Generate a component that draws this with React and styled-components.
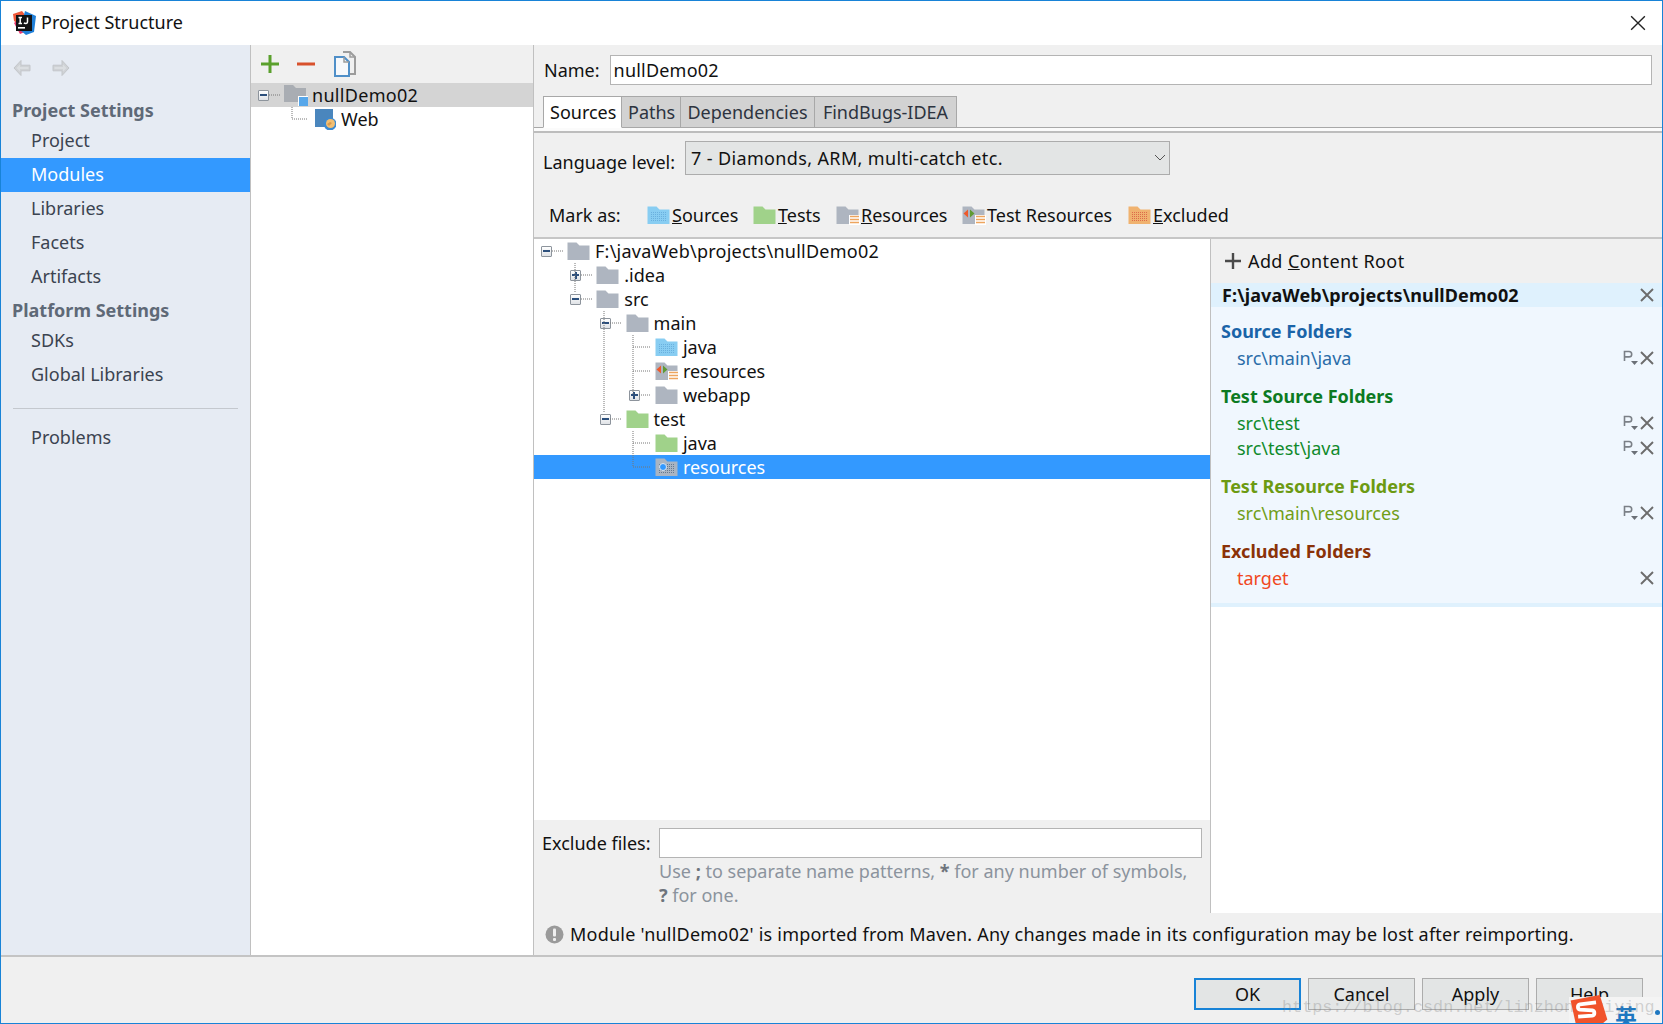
import React from 'react'
import styled, { createGlobalStyle } from 'styled-components'

const GlobalStyle = createGlobalStyle`
  html, body { margin: 0; padding: 0; background: #fff; }
  body { font-family: "Noto Sans", "Open Sans", sans-serif; font-size: 18px; color: #111; }
  * { box-sizing: border-box; }
`

const Window = styled.div`
  position: relative;
  width: 1663px;
  height: 1024px;
  display: flex;
  flex-direction: column;
  border: 1px solid #1883d7;
  overflow: hidden;
  background: #f0f0f0;
`
const TitleBar = styled.div`
  height: 44px;
  flex: none;
  background: #fff;
  display: flex;
  align-items: center;
  padding: 0 16px 0 11px;
  gap: 5px;
`
const TitleText = styled.div`
  flex: 1;
  font-size: 18px;
  line-height: 24px;
  margin-top: -2px;
`
const Body = styled.div`
  flex: 1;
  display: flex;
  min-height: 0;
`
const Sidebar = styled.div`
  width: 250px;
  flex: none;
  background: #e6ebf3;
  border-right: 1px solid #c0c0c0;
  display: flex;
  flex-direction: column;
`
const NavArrows = styled.div`
  height: 43px;
  display: flex;
  align-items: center;
  gap: 19px;
  padding: 0 0 0 11px;
  margin-top: 1px;
`
const SideHeading = styled.div`
  height: 30px;
  line-height: 32px;
  padding-left: 11px;
  font-weight: 700;
  color: #5f6977;
  margin-top: ${p => p.$top || 0}px;
`
const SideItem = styled.div`
  height: 34px;
  line-height: 33px;
  padding-left: 30px;
  color: ${p => (p.$active ? '#fff' : '#3b4350')};
  background: ${p => (p.$active ? '#3399ff' : 'transparent')};
`
const SideRule = styled.div`
  height: 1px;
  background: #c4c8ce;
  margin: 16px 12px 12px 12px;
`
const ModulePane = styled.div`
  width: 283px;
  flex: none;
  background: #fff;
  border-right: 1px solid #c0c0c0;
  display: flex;
  flex-direction: column;
`
const PaneToolbar = styled.div`
  height: 38px;
  background: #f0f0f0;
  display: flex;
  align-items: center;
  padding-left: 9px;
  gap: 16px;
`
const ModuleList = styled.div`
  position: relative;
  flex: 1;
`
const ModuleRow = styled.div`
  height: 24px;
  display: flex;
  align-items: center;
  gap: ${p => p.$gap}px;
  padding-left: ${p => p.$indent}px;
  background: ${p => (p.$selected ? '#d4d4d4' : 'transparent')};
`
const ModuleName = styled.span`
  letter-spacing: 0.3px;
`
const Main = styled.div`
  flex: 1;
  min-width: 0;
  display: flex;
  flex-direction: column;
`
const NameRow = styled.div`
  height: 51px;
  flex: none;
  display: flex;
  align-items: flex-start;
  padding: 10px 10px 0 10px;
  gap: 10px;
`
const FieldLabel = styled.div`
  line-height: 30px;
  flex: none;
`
const Field = styled.div`
  flex: 1;
  height: 30px;
  line-height: 28px;
  background: #fff;
  border: 1px solid #b4b4b4;
  padding-left: 3px;
  letter-spacing: 0.2px;
`
const TabStrip = styled.div`
  height: 32px;
  flex: none;
  display: flex;
  padding-left: 9px;
  border-bottom: 1px solid #a8a8a8;
`
const Tab = styled.div`
  height: 32px;
  line-height: 30px;
  padding: 0 6px;
  width: ${p => p.$width}px;
  text-align: center;
  white-space: nowrap;
  background: ${p => (p.$active ? '#fff' : '#d2d2d2')};
  border: 1px solid #a8a8a8;
  border-left-width: ${p => (p.$active ? 1 : 0)}px;
  border-bottom: ${p => (p.$active ? '1px solid #fff' : '1px solid #a8a8a8')};
  color: ${p => (p.$active ? '#111' : '#2d3440')};
`
const TabGap = styled.div`
  height: 5px;
  flex: none;
  background: #fbfbfb;
  border-bottom: 2px solid #bdbdbd;
`
const LanguageRow = styled.div`
  height: 48px;
  flex: none;
  display: flex;
  align-items: flex-start;
  padding: 8px 0 0 9px;
  gap: 10px;
`
const LanguageLabel = styled.div`
  line-height: 34px;
  margin-top: 4px;
`
const Combo = styled.div`
  width: 485px;
  height: 34px;
  line-height: 32px;
  background: #e3e5e5;
  border: 1px solid #acacac;
  padding: 0 3px 0 5px;
  display: flex;
  align-items: center;
  justify-content: space-between;
  letter-spacing: 0.36px;
`
const MarkRow = styled.div`
  height: 58px;
  flex: none;
  display: flex;
  align-items: center;
  padding: 16px 0 4px 15px;
  border-bottom: 2px solid #c6c6c6;
`
const MarkLabel = styled.div`
  width: 98px;
  flex: none;
`
const MarkButton = styled.div`
  display: flex;
  align-items: center;
  gap: 1px;
  width: ${p => p.$width}px;
  flex: none;
`
const SplitArea = styled.div`
  flex: 1;
  display: flex;
  min-height: 0;
`
const TreeColumn = styled.div`
  width: 677px;
  flex: none;
  display: flex;
  flex-direction: column;
  border-right: 1px solid #c0c0c0;
`
const TreePane = styled.div`
  position: relative;
  flex: 1;
  background: #fff;
`
const TreeRow = styled.div`
  height: 24px;
  display: flex;
  align-items: center;
  padding-left: ${p => 7 + p.$level * 29.3}px;
  background: ${p => (p.$selected ? '#3399ff' : 'transparent')};
  color: ${p => (p.$selected ? '#fff' : '#111')};
`
const ExpanderSlot = styled.div`
  width: 26px;
  flex: none;
  display: flex;
  align-items: center;
`
const TreeLabel = styled.div`
  margin-left: 4px;
  line-height: 24px;
  letter-spacing: ${p => (p.$root ? 0.25 : 0)}px;
`
const ExcludeBlock = styled.div`
  height: 93px;
  flex: none;
  display: grid;
  grid-template-columns: 117px 543px;
  grid-template-rows: 32px 24px 24px;
  padding: 7px 0 0 8px;
  align-items: center;
`
const ExcludeField = styled.div`
  height: 30px;
  background: #fff;
  border: 1px solid #b4b4b4;
`
const Hint = styled.div`
  grid-column: 2;
  color: #8b939d;
  white-space: nowrap;
  b { color: #6e747c; }
`
const RootsPane = styled.div`
  flex: 1;
  display: flex;
  flex-direction: column;
  background: #fff;
`
const AddRoot = styled.div`
  height: 44px;
  flex: none;
  background: #f0f0f0;
  display: flex;
  align-items: center;
  gap: 7px;
  padding: 0 0 0 14px;
  letter-spacing: 0.4px;
`
const RootPanel = styled.div`
  background: #f0f7fe;
  border-bottom: 4px solid #dff1fd;
  height: 324px;
  flex: none;
`
const RootHeader = styled.div`
  height: 24px;
  background: #dff1fd;
  display: flex;
  align-items: center;
  justify-content: space-between;
  padding: 0 8px 0 11px;
  font-weight: 700;
  letter-spacing: 0.1px;
  margin-bottom: 11px;
`
const FolderSection = styled.div`
  margin-bottom: 13px;
`
const SectionTitle = styled.div`
  height: 27px;
  line-height: 26px;
  padding-left: 10px;
  font-weight: 700;
  color: ${p => p.$color};
`
const FolderItem = styled.div`
  height: 25px;
  display: flex;
  align-items: center;
  justify-content: space-between;
  padding: 0 8px 0 26px;
  color: ${p => p.$color};
`
const ItemActions = styled.div`
  display: flex;
  align-items: center;
  gap: 2px;
`
const MessageRow = styled.div`
  height: 42px;
  flex: none;
  display: flex;
  align-items: center;
  gap: 6px;
  padding-left: 11px;
  letter-spacing: 0.22px;
  white-space: nowrap;
`
const Footer = styled.div`
  height: 68px;
  flex: none;
  border-top: 2px solid #c4c4c4;
  display: flex;
  justify-content: flex-end;
  align-items: flex-start;
  gap: 7px;
  padding: 21px 19px 0 0;
`
const DialogButton = styled.div`
  width: 107px;
  height: 32px;
  line-height: ${p => (p.$primary ? 28 : 30)}px;
  text-align: center;
  background: #e3e5e5;
  border: ${p => (p.$primary ? '2px solid #1883d7' : '1px solid #acacac')};
`
const Watermark = styled.div`
  position: absolute;
  left: 1281px;
  top: 995px;
  font-family: "Liberation Mono", monospace;
  font-size: 16.8px;
  line-height: 24px;
  color: rgba(120, 120, 120, 0.3);
  white-space: nowrap;
  pointer-events: none;
`
const ImeBar = styled.div`
  position: absolute;
  right: 0;
  bottom: 0;
  width: 93px;
  height: 26px;
  background: #f4f4f4;
`
const ImeWord = styled.div`
  position: absolute;
  left: 46px;
  top: 5px;
  font-family: "Noto Sans CJK SC", sans-serif;
  font-weight: 700;
  font-size: 22px;
  line-height: 26px;
  color: #1f78c1;
`
const ImeDot = styled.div`
  position: absolute;
  right: 2px;
  top: 13px;
  width: 5px;
  height: 5px;
  border-radius: 50%;
  background: #1f78c1;
`
const ImeLogo = styled.svg`
  position: absolute;
  left: -2px;
  top: -3px;
  z-index: 2;
`
const TreeLines = styled.svg`
  position: absolute;
  left: 0;
  top: 0;
  pointer-events: none;
`
const ExpanderBox = styled.div`
  width: 11px;
  height: 11px;
  background: linear-gradient(#fff, #dfe2e6);
  border: 1px solid #8d949c;
  border-radius: 1px;
  position: relative;
  &::before {
    content: "";
    position: absolute;
    left: 1px;
    right: 1px;
    top: 3.5px;
    height: 2px;
    background: #2c4f7c;
  }
  ${p => p.$plus && `
    &::after {
      content: "";
      position: absolute;
      top: 1px;
      bottom: 1px;
      left: 3.5px;
      width: 2px;
      background: #2c4f7c;
    }
  `}
`

const FOLDER = 'M0.5 0.5h9l3 3h10v14.500h-22z'

const FolderIcon = ({ kind = 'plain' }) => {
  const fill = {
    plain: '#aeb5c0',
    source: '#88cdf2',
    test: '#a0d28a',
    resource: '#aeb5c0',
    testResource: '#aeb5c0',
    excluded: '#f0b26f',
    selected: '#a9b4c2',
  }[kind]
  const dotted = { source: '#6ab0de', excluded: '#dd6b4a', selected: '#66798f' }[kind]
  const pid = `dots-${kind}`
  return (
    <svg width="24" height="19" viewBox="0 0 24 19" style={{ flex: 'none' }}>
      {dotted && (
        <defs>
          <pattern id={pid} width="2" height="2" patternUnits="userSpaceOnUse">
            <rect width="1" height="1" fill={dotted} />
          </pattern>
        </defs>
      )}
      <path d={FOLDER} fill={fill} />
      {dotted && <rect x="3" y="5" width="17" height="11" fill={`url(#${pid})`} />}
      {kind === 'selected' && <circle cx="8" cy="9" r="3.5" fill="#3399ff" stroke="#dfe6ee" />}
      {(kind === 'resource' || kind === 'testResource') && (
        <g>
          <rect x="13" y="9" width="11" height="10" fill="#fff" />
          <path d="M14 10.500h9M14 13.500h9M14 16.500h9" stroke="#eda55e" strokeWidth="1.6" />
        </g>
      )}
      {kind === 'testResource' && (
        <g>
          <path d="M6 3.500l-4.500 4 4.500 4z" fill="#ee5a2c" />
          <path d="M8 3.500l4.500 4-4.500 4z" fill="#5f9a32" />
        </g>
      )}
    </svg>
  )
}

const ModuleFolder = () => (
  <svg width="24" height="22" viewBox="0 0 24 22" style={{ flex: 'none' }}>
    <path d="M0 1h9l3 3h10v14h-22z" fill="#a9adb3" />
    <rect x="14" y="12" width="10" height="10" fill="#fff" />
    <rect x="15" y="13" width="9" height="9" fill="#57a7ea" />
  </svg>
)

const WebIcon = () => (
  <svg width="21" height="21" viewBox="0 0 21 21" style={{ flex: 'none' }}>
    <rect x="0" y="0" width="18" height="18" fill="#4a86bd" />
    <circle cx="15" cy="15" r="6.500" fill="#3d8ad0" />
    <circle cx="15.500" cy="14.500" r="4.500" fill="#f3bf72" />
    <path d="M12 15l3-2 2 1-3 3z" fill="#d99a4c" />
  </svg>
)

const IdeaLogo = () => (
  <svg width="24" height="24" viewBox="0 0 24 24" style={{ flex: 'none' }}>
    <path d="M1 3L10 0l4 5-8 8-4-3z" fill="#f0593a" />
    <path d="M2 12l6 11 7-3-9-11z" fill="#e8386f" />
    <path d="M13 0l11 5-2 16-8 3-6-5z" fill="#1f7fd8" />
    <rect x="4" y="4" width="16" height="16" fill="#121214" />
    <rect x="6" y="16" width="7" height="1.600" fill="#fff" />
    <path d="M6.500 6.500h3.500M8.200 6.500v6M6.500 12.500h3.500M15.500 6.500v4.600c0 1.600-2.600 1.800-3.500.6" stroke="#fff" strokeWidth="1.500" fill="none" />
  </svg>
)

const CloseIcon = ({ size = 14, stroke = '#6c6c6c', width = 1.9 }) => (
  <svg width={size} height={size} viewBox="0 0 14 14" style={{ flex: 'none' }}>
    <path d="M1 1l12 12M13 1L1 13" stroke={stroke} strokeWidth={width} />
  </svg>
)

const NavArrow = ({ flip }) => (
  <svg width="20" height="20" viewBox="0 0 20 20" style={{ transform: flip ? 'scaleX(-1)' : 'none' }}>
    <path d="M9 2.500L2 10l7 7.500v-4.700h9V7.200H9z" fill="#cfd2d5" stroke="#c3c6ca" strokeWidth="1" />
    <path d="M8 6.500L4.500 10 8 13.500v-2.500h8.500V9H8z" fill="#dbdee1" />
  </svg>
)

const PlusTool = () => (
  <svg width="20" height="20" viewBox="0 0 20 20">
    <path d="M1 10h18M10 1v18" stroke="#5aa02c" strokeWidth="3" />
  </svg>
)

const MinusTool = () => (
  <svg width="20" height="20" viewBox="0 0 20 20">
    <path d="M1 10h18" stroke="#d8512c" strokeWidth="3" />
  </svg>
)

const CopyTool = () => (
  <svg width="24" height="26" viewBox="0 0 24 26">
    <path d="M11 1h7l5 5v17h-5" fill="none" stroke="#9c9c9c" strokeWidth="2" />
    <path d="M18 1v5h5" fill="none" stroke="#9c9c9c" strokeWidth="1.500" />
    <path d="M3 6h9l5 5v14H3z" fill="#f6f8fb" stroke="#4f8fc8" strokeWidth="2" />
    <path d="M12 6v5h5" fill="none" stroke="#9c9c9c" strokeWidth="1.500" />
  </svg>
)

const AddIcon = () => (
  <svg width="16" height="16" viewBox="0 0 16 16" style={{ flex: 'none' }}>
    <path d="M0 8h16M8 0v16" stroke="#4a4a4a" strokeWidth="2.400" />
  </svg>
)

const PropsIcon = () => (
  <svg width="15" height="16" viewBox="0 0 15 16" style={{ flex: 'none' }}>
    <path d="M1.500 11V1.500h4.500a2.600 2.600 0 010 5.400H1.500" fill="none" stroke="#7b8087" strokeWidth="1.600" />
    <path d="M8 11h7l-3.500 4z" fill="#6b7077" />
  </svg>
)

const ChevronIcon = () => (
  <svg width="12" height="8" viewBox="0 0 12 8">
    <path d="M1 1l5 5 5-5" fill="none" stroke="#555" strokeWidth="1" />
  </svg>
)

const WarnIcon = () => (
  <svg width="19" height="19" viewBox="0 0 19 19" style={{ flex: 'none' }}>
    <circle cx="9.500" cy="9.500" r="9" fill="#9a9a9a" />
    <rect x="8" y="3.500" width="3" height="8" rx="1" fill="#efefef" />
    <rect x="8" y="13" width="3" height="3" rx="1" fill="#efefef" />
  </svg>
)

const sideTop = [
  { name: 'Project' },
  { name: 'Modules', active: true },
  { name: 'Libraries' },
  { name: 'Facets' },
  { name: 'Artifacts' },
]

const treeRows = [
  { level: 0, name: 'F:\\javaWeb\\projects\\nullDemo02', open: 'minus', root: true },
  { level: 1, name: '.idea', open: 'plus' },
  { level: 1, name: 'src', open: 'minus' },
  { level: 2, name: 'main', open: 'minus' },
  { level: 3, name: 'java', kind: 'source' },
  { level: 3, name: 'resources', kind: 'testResource' },
  { level: 3, name: 'webapp', open: 'plus' },
  { level: 2, name: 'test', open: 'minus', kind: 'test' },
  { level: 3, name: 'java', kind: 'test' },
  { level: 3, name: 'resources', kind: 'selected', selected: true },
]

const sections = [
  { title: 'Source Folders', head: '#1a64a8', color: '#2a6ca8', items: ['src\\main\\java'], props: true },
  { title: 'Test Source Folders', head: '#0c7a22', color: '#0f8a2b', items: ['src\\test', 'src\\test\\java'], props: true },
  { title: 'Test Resource Folders', head: '#6c9a12', color: '#709e18', items: ['src\\main\\resources'], props: true },
  { title: 'Excluded Folders', head: '#8a3208', color: '#f0481e', items: ['target'] },
]

// tree connectors, x/y measured from the tree pane's corner
const treeLines = 'M18 12h12 M41 24v30 M47 36h12 M47 60h12 M70 72v102 M76 84h12 M76 180h12 M99 96v60 M99 108h18 M99 132h18 M105 156h12 M99 192v36 M99 204h18 M99 228h18'

const App = () => (
  <>
    <GlobalStyle />
    <Window>
      <TitleBar>
        <IdeaLogo />
        <TitleText>Project Structure</TitleText>
        <CloseIcon size={16} stroke="#222" width={1.2} />
      </TitleBar>
      <Body>
        <Sidebar>
          <NavArrows>
            <NavArrow />
            <NavArrow flip />
          </NavArrows>
          <SideHeading $top={5}>Project Settings</SideHeading>
          {sideTop.map(item => (
            <SideItem key={item.name} $active={item.active}>{item.name}</SideItem>
          ))}
          <SideHeading>Platform Settings</SideHeading>
          <SideItem>SDKs</SideItem>
          <SideItem>Global Libraries</SideItem>
          <SideRule />
          <SideItem>Problems</SideItem>
        </Sidebar>
        <ModulePane>
          <PaneToolbar>
            <PlusTool />
            <MinusTool />
            <CopyTool />
          </PaneToolbar>
          <ModuleList>
            <TreeLines width="282" height="60">
              <path d="M18 12h12 M41 24v12h16" stroke="#777" strokeDasharray="1 1" fill="none" />
            </TreeLines>
            <ModuleRow $selected $indent={7} $gap={4}>
              <ExpanderBox />
              <span style={{ width: 7 }} />
              <ModuleFolder />
              <ModuleName>nullDemo02</ModuleName>
            </ModuleRow>
            <ModuleRow $indent={64} $gap={5}>
              <WebIcon />
              <span>Web</span>
            </ModuleRow>
          </ModuleList>
        </ModulePane>
        <Main>
          <NameRow>
            <FieldLabel>Name:</FieldLabel>
            <Field>nullDemo02</Field>
          </NameRow>
          <TabStrip>
            <Tab $active $width={79}>Sources</Tab>
            <Tab $width={59}>Paths</Tab>
            <Tab $width={134}>Dependencies</Tab>
            <Tab $width={142}>FindBugs-IDEA</Tab>
          </TabStrip>
          <TabGap />
          <LanguageRow>
            <LanguageLabel>Language level:</LanguageLabel>
            <Combo>
              <span>7 - Diamonds, ARM, multi-catch etc.</span>
              <ChevronIcon />
            </Combo>
          </LanguageRow>
          <MarkRow>
            <MarkLabel>Mark as:</MarkLabel>
            <MarkButton $width={106}><FolderIcon kind="source" /><span><u>S</u>ources</span></MarkButton>
            <MarkButton $width={83}><FolderIcon kind="test" /><span><u>T</u>ests</span></MarkButton>
            <MarkButton $width={126}><FolderIcon kind="resource" /><span><u>R</u>esources</span></MarkButton>
            <MarkButton $width={166}><FolderIcon kind="testResource" /><span>Test Resources</span></MarkButton>
            <MarkButton $width={110}><FolderIcon kind="excluded" /><span><u>E</u>xcluded</span></MarkButton>
          </MarkRow>
          <SplitArea>
            <TreeColumn>
              <TreePane>
                {treeRows.map((row, i) => (
                  <TreeRow key={i} $level={row.level} $selected={row.selected}>
                    <ExpanderSlot>
                      {row.open && <ExpanderBox $plus={row.open === 'plus'} />}
                    </ExpanderSlot>
                    <FolderIcon kind={row.kind} />
                    <TreeLabel $root={row.root}>{row.name}</TreeLabel>
                  </TreeRow>
                ))}
                <TreeLines width="180" height="250">
                  <path d={treeLines} stroke="#777" strokeDasharray="1 1" fill="none" />
                </TreeLines>
              </TreePane>
              <ExcludeBlock>
                <div>Exclude files:</div>
                <ExcludeField />
                <Hint>Use <b>;</b> to separate name patterns, <b>*</b> for any number of symbols,</Hint>
                <Hint><b>?</b> for one.</Hint>
              </ExcludeBlock>
            </TreeColumn>
            <RootsPane>
              <AddRoot>
                <AddIcon />
                <span>Add <u>C</u>ontent Root</span>
              </AddRoot>
              <RootPanel>
                <RootHeader>
                  <span>F:\javaWeb\projects\nullDemo02</span>
                  <CloseIcon />
                </RootHeader>
                {sections.map(section => (
                  <FolderSection key={section.title}>
                    <SectionTitle $color={section.head}>{section.title}</SectionTitle>
                    {section.items.map(item => (
                      <FolderItem key={item} $color={section.color}>
                        <span>{item}</span>
                        <ItemActions>
                          {section.props && <PropsIcon />}
                          <CloseIcon />
                        </ItemActions>
                      </FolderItem>
                    ))}
                  </FolderSection>
                ))}
              </RootPanel>
            </RootsPane>
          </SplitArea>
          <MessageRow>
            <WarnIcon />
            <span>Module 'nullDemo02' is imported from Maven. Any changes made in its configuration may be lost after reimporting.</span>
          </MessageRow>
        </Main>
      </Body>
      <Footer>
        <DialogButton $primary>OK</DialogButton>
        <DialogButton>Cancel</DialogButton>
        <DialogButton>Apply</DialogButton>
        <DialogButton>Help</DialogButton>
      </Footer>
      <ImeBar>
        <ImeLogo width="43" height="32" viewBox="0 0 44 34">
          <path d="M3 7L34 1l8 26-8 7H9z" fill="#f1532b" />
          <path d="M30 9L13 11c-3 .5-3 5 0 5.500l13 1c3 .5 3 5 0 5.500l-15 1" fill="none" stroke="#fff" strokeWidth="4" />
        </ImeLogo>
        <ImeWord>英</ImeWord>
        <ImeDot />
      </ImeBar>
      <Watermark>https://blog.csdn.net/linzhongsuiying</Watermark>
    </Window>
  </>
)

export default App
